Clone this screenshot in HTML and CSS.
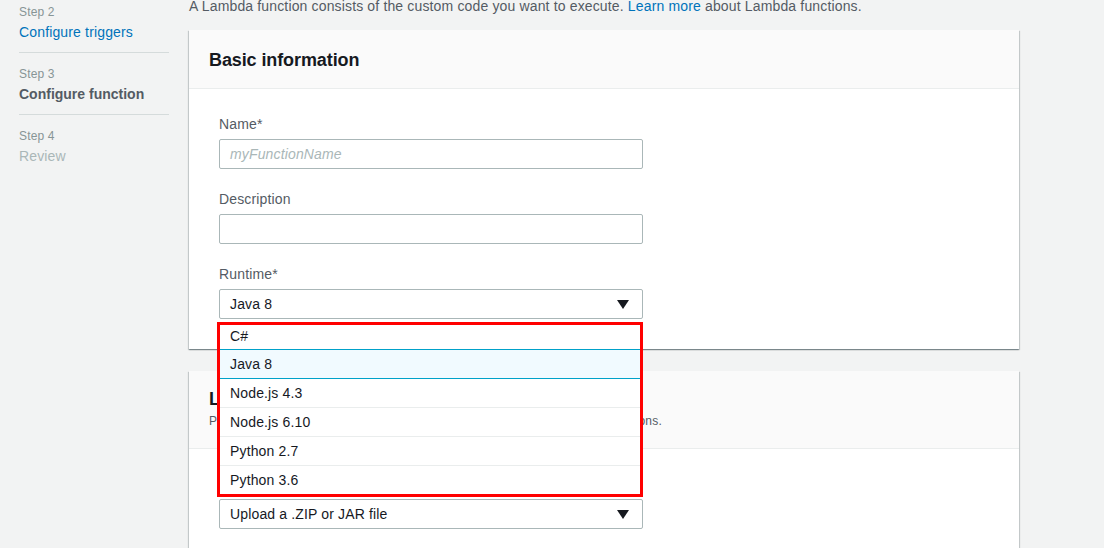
FILE: index.html
```html
<!DOCTYPE html>
<html>
<head>
<meta charset="utf-8">
<link rel="stylesheet" href="styles.css">
</head>
<body>
<div class="page">
  <nav class="steps">
    <div class="step">
      <div class="step-num">Step 2</div>
      <div class="step-title link">Configure triggers</div>
    </div>
    <div class="step">
      <div class="step-num">Step 3</div>
      <div class="step-title current">Configure function</div>
    </div>
    <div class="step last">
      <div class="step-num">Step 4</div>
      <div class="step-title disabled">Review</div>
    </div>
  </nav>
  <main class="main">
    <p class="intro">A Lambda function consists of the custom code you want to execute. <a class="link">Learn more</a> about Lambda functions.</p>
    <section class="card">
      <header class="card-head">
        <h2>Basic information</h2>
      </header>
      <div class="card-body">
        <div class="field">
          <label>Name*</label>
          <div class="input placeholder">myFunctionName</div>
        </div>
        <div class="field">
          <label>Description</label>
          <div class="input"></div>
        </div>
        <div class="field">
          <label>Runtime*</label>
          <div class="select-wrap">
            <div class="input select">
              <span>Java 8</span>
              <svg class="caret" width="12" height="9" viewBox="0 0 12 9"><polygon points="0,0 12,0 6,9" fill="#16191f"/></svg>
            </div>
            <ul class="menu">
              <li>C#</li>
              <li class="active">Java 8</li>
              <li>Node.js 4.3</li>
              <li>Node.js 6.10</li>
              <li>Python 2.7</li>
              <li>Python 3.6</li>
            </ul>
          </div>
        </div>
      </div>
    </section>
    <section class="card">
      <header class="card-head two">
        <h2>Lambda function code</h2>
        <p class="sub">Provide the code for your function. Learn more about deploying Lambda functions.</p>
      </header>
      <div class="card-body">
        <div class="field">
          <label>Code entry type</label>
          <div class="input select">
            <span>Upload a .ZIP or JAR file</span>
            <svg class="caret" width="12" height="9" viewBox="0 0 12 9"><polygon points="0,0 12,0 6,9" fill="#16191f"/></svg>
          </div>
        </div>
      </div>
    </section>
  </main>
</div>
</body>
</html>
```

FILE: styles.css
```css
* { box-sizing: border-box; }
html, body { margin: 0; padding: 0; }
body {
  background: #f2f3f3;
  font-family: "Liberation Sans", Arial, sans-serif;
  font-size: 14px;
  color: #16191f;
  overflow: hidden;
  height: 548px;
  letter-spacing: 0.15px;
}
.page {
  display: flex;
  margin-top: -9px;
}
.steps {
  width: 189px;
  flex: none;
  padding-left: 19px;
  padding-right: 20px;
}
.step {
  padding: 13px 0 10px;
  border-bottom: 1px solid #d5dbdb;
}
.step.last { border-bottom: none; }
.step-num {
  font-size: 12px;
  color: #879596;
  line-height: 16px;
}
.step-title {
  font-size: 14px;
  line-height: 20px;
  margin-top: 2px;
}
.link { color: #0073bb; text-decoration: none; }
.current { font-weight: bold; color: #545b64; letter-spacing: 0; }
.disabled { color: #aab7b8; }
.main {
  width: 830px;
  flex: none;
}
.intro {
  margin: 0 0 14px;
  font-size: 14px;
  line-height: 20px;
  color: #545b64;
  padding-top: 5px;
}
.card {
  background: #fff;
  box-shadow: 0 1px 1px 0 rgba(0,28,36,.3), 1px 1px 1px 0 rgba(0,28,36,.15), -1px 1px 1px 0 rgba(0,28,36,.15);
  margin-bottom: 22px;
}
.card-head {
  background: #fafafa;
  border-bottom: 1px solid #eaeded;
  padding: 19px 20px 17px;
}
.card-head h2 {
  margin: 0;
  font-size: 18px;
  line-height: 22px;
  font-weight: bold;
  color: #16191f;
  letter-spacing: -0.1px;
}
.card-head.two { padding: 17px 20px 19px; }
.card-head .sub {
  margin: 3px 0 0;
  font-size: 12px;
  line-height: 16px;
  color: #545b64;
  letter-spacing: 0.2px;
}
.card-body {
  padding: 25px 30px 30px;
}
.field { width: 424px; }
.field + .field { margin-top: 20px; }
.field label {
  display: block;
  font-size: 14px;
  line-height: 20px;
  color: #545b64;
  margin-bottom: 5px;
}
.input {
  height: 30px;
  border: 1px solid #aab7b8;
  border-radius: 2px;
  background: #fff;
  padding: 0 10px;
  line-height: 28px;
  font-size: 14px;
  color: #16191f;
}
.placeholder {
  color: #aab7b8;
  font-style: italic;
}
.select {
  display: flex;
  align-items: center;
  justify-content: space-between;
  padding-right: 13px;
}
.caret { display: block; }
.select-wrap { position: relative; }
.menu {
  position: absolute;
  left: -2px;
  top: 33px;
  width: 426px;
  margin: 0;
  padding: 0;
  list-style: none;
  background: #fff;
  border: 3px solid #ff0000;
  z-index: 5;
}
.menu li {
  height: 29px;
  line-height: 28px;
  padding-left: 10px;
  border-top: 1px solid #eaeded;
  color: #16191f;
}
.menu li:first-child { border-top: none; height: 24px; line-height: 22px; }
.menu li.active {
  background: #f1faff;
  border-top: 1px solid #00a1c9;
  border-bottom: 1px solid #00a1c9;
  height: 30px;
}
.menu li.active + li { border-top: none; height: 28px; }
```
